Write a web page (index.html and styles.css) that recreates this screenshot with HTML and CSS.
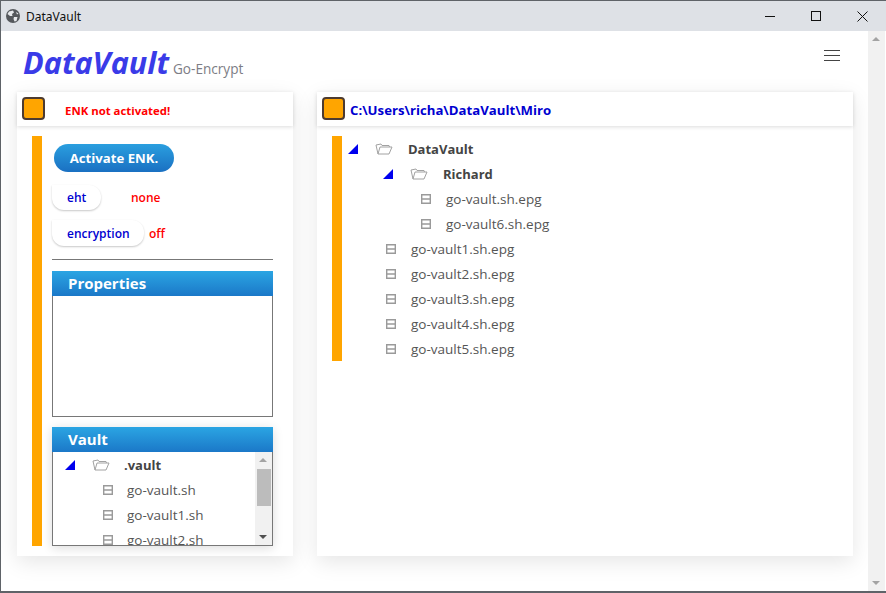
FILE: index.html
```html
<!DOCTYPE html>
<html>
<head>
  <meta charset="UTF-8">
  <title>DataVault</title>
  <link rel="stylesheet" href="styles.css">
</head>
<body>
  <svg class="sprites" width="0" height="0">
    <symbol id="i-tri" viewBox="0 0 10 10"><polygon points="10,0 10,10 0,10" fill="#0000ee"/></symbol>
    <symbol id="i-folder" viewBox="0 0 18 12">
      <path d="M3 11 L1 2 L6 1 L7 2.5 L14 2.5 L14.5 4 M3 11 L5 4 L17 4 L14 11 Z" fill="none" stroke="#a2a2a2" stroke-width="1"/>
    </symbol>
    <symbol id="i-file" viewBox="0 0 10 10">
      <path d="M0.7 0.7 H9.3 V9.3 H0.7 Z M1 5 H9" fill="none" stroke="#9a9a9a" stroke-width="1.4"/>
    </symbol>
  </svg>

  <div class="window">
    <div class="titlebar">
      <svg class="globe" viewBox="0 0 14 14" width="14" height="14">
        <circle cx="7" cy="7" r="7" fill="#55585c"/>
        <path d="M3 2.5 L7 1.5 L8 3.5 L6 5 L6.5 7 L4 7 L1.5 5 Z M8 8 L11.5 8 L10.5 12 L8.5 12.5 L7.5 10 Z M10 3 L12.5 4.5 L11 5.5 Z" fill="#e6e8eb"/>
      </svg>
      <span class="title">DataVault</span>
      <div class="controls">
        <span class="ctl"><span class="ctl-min"></span></span>
        <span class="ctl"><span class="ctl-max"></span></span>
        <span class="ctl">
          <svg viewBox="0 0 11 11" width="11" height="11"><path d="M0.5 0.5 L10.5 10.5 M10.5 0.5 L0.5 10.5" stroke="#111" stroke-width="1" fill="none"/></svg>
        </span>
      </div>
    </div>

    <div class="client">
      <div class="page">
        <header class="top">
          <div class="brand">
            <span class="logo">DataVault</span>
            <span class="sub">Go-Encrypt</span>
          </div>
          <div class="burger"><span></span><span></span><span></span></div>
        </header>

        <div class="panels">
          <section class="panel panel-left">
            <div class="panel-head">
              <span class="led"></span>
              <span class="warn">ENK not activated!</span>
            </div>
            <div class="panel-body">
              <div class="bar"></div>
              <div class="side">
                <button class="activate">Activate ENK.</button>
                <div class="status status-eht">
                  <span class="pill pill-eht">eht</span>
                  <span class="val val-none">none</span>
                </div>
                <div class="status status-enc">
                  <span class="pill pill-enc">encryption</span>
                  <span class="val val-off">off</span>
                </div>
                <hr class="rule">
                <div class="box box-props">
                  <div class="box-head">Properties</div>
                  <div class="box-body"></div>
                </div>
                <div class="box box-vault">
                  <div class="box-head">Vault</div>
                  <div class="box-body vault-body">
                    <div class="vault-list">
                      <div class="row dir"><svg class="tri"><use href="#i-tri"/></svg><svg class="folder"><use href="#i-folder"/></svg><span>.vault</span></div>
                      <div class="row file in-1"><svg class="doc"><use href="#i-file"/></svg><span>go-vault.sh</span></div>
                      <div class="row file in-1"><svg class="doc"><use href="#i-file"/></svg><span>go-vault1.sh</span></div>
                      <div class="row file in-1"><svg class="doc"><use href="#i-file"/></svg><span>go-vault2.sh</span></div>
                    </div>
                    <div class="mini-scroll">
                      <span class="arrow-up"></span>
                      <span class="thumb"></span>
                      <span class="arrow-down"></span>
                    </div>
                  </div>
                </div>
              </div>
            </div>
          </section>

          <section class="panel panel-right">
            <div class="panel-head">
              <span class="led"></span>
              <span class="path">C:\Users\richa\DataVault\Miro</span>
            </div>
            <div class="panel-body">
              <div class="bar bar-tree">
              </div>
              <div class="tree">
                <div class="row dir"><svg class="tri"><use href="#i-tri"/></svg><svg class="folder"><use href="#i-folder"/></svg><span>DataVault</span></div>
                <div class="row dir sub-dir"><svg class="tri"><use href="#i-tri"/></svg><svg class="folder"><use href="#i-folder"/></svg><span>Richard</span></div>
                <div class="row file in-2"><svg class="doc"><use href="#i-file"/></svg><span>go-vault.sh.epg</span></div>
                <div class="row file in-2"><svg class="doc"><use href="#i-file"/></svg><span>go-vault6.sh.epg</span></div>
                <div class="row file in-1"><svg class="doc"><use href="#i-file"/></svg><span>go-vault1.sh.epg</span></div>
                <div class="row file in-1"><svg class="doc"><use href="#i-file"/></svg><span>go-vault2.sh.epg</span></div>
                <div class="row file in-1"><svg class="doc"><use href="#i-file"/></svg><span>go-vault3.sh.epg</span></div>
                <div class="row file in-1"><svg class="doc"><use href="#i-file"/></svg><span>go-vault4.sh.epg</span></div>
                <div class="row file in-1"><svg class="doc"><use href="#i-file"/></svg><span>go-vault5.sh.epg</span></div>
              </div>
            </div>
          </section>
        </div>
      </div>

      <div class="page-scroll">
        <span class="arrow-up"></span>
        <span class="arrow-down"></span>
      </div>
    </div>
  </div>
</body>
</html>
```

FILE: styles.css
```css
html, body {
  margin: 0;
  height: 100%;
  overflow: hidden;
  background-color: #fff;
}

body {
  font-family: "Open Sans", "Noto Sans", sans-serif;
  font-size: 14px;
  color: #444;
}

.sprites {
  display: none;
}

.window {
  height: 593px;
  box-sizing: border-box;
  display: flex;
  flex-direction: column;
  border-top: 1px solid #5f6368;
  border-left: 1px solid #5f6368;
  border-bottom: 2px solid #5f6368;
}

/* title bar */
.titlebar {
  height: 30px;
  flex: none;
  display: flex;
  align-items: center;
  padding-left: 5px;
  background-color: #dee1e6;
}

.globe {
  margin-top: -1px;
}

.title {
  margin-left: 6px;
  font-family: "Noto Sans", sans-serif;
  font-size: 12px;
  color: #111;
}

.controls {
  margin-left: auto;
  margin-right: 1px;
  display: flex;
}

.ctl {
  width: 46px;
  height: 29px;
  display: flex;
  align-items: center;
  justify-content: center;
}

.ctl-min {
  width: 10px;
  height: 1px;
  background-color: #111;
}

.ctl-max {
  width: 8px;
  height: 8px;
  border: 1px solid #111;
}

/* page */
.client {
  flex: 1;
  display: flex;
  min-height: 0;
}

.page {
  flex: 1;
  min-width: 0;
  padding: 0 15px 0 16px;
}

.top {
  height: 61px;
  display: flex;
  align-items: flex-start;
  justify-content: space-between;
}

.brand {
  margin: 10px 0 0 6px;
  display: flex;
  align-items: baseline;
  gap: 4px;
}

.logo {
  font-family: "Open Sans", sans-serif;
  font-size: 30.6px;
  font-weight: 700;
  font-style: italic;
  color: #3a3be8;
}

.sub {
  font-size: 13.6px;
  color: #7d7d85;
}

.burger {
  margin: 19px 13px 0 0;
  width: 16px;
  display: flex;
  flex-direction: column;
  gap: 4px;
}

.burger span {
  height: 1px;
  background-color: #444;
}

.panels {
  display: flex;
  gap: 24px;
}

.panel {
  height: 464px;
  background-color: #fff;
  box-shadow: 0 6px 20px rgba(0, 0, 0, 0.1);
}

.panel-left {
  width: 276px;
  flex: none;
}

.panel-right {
  width: 536px;
  flex: none;
}

.panel-head {
  height: 34px;
  display: flex;
  align-items: center;
  padding-left: 5px;
  box-shadow: 0 1px 4px rgba(0, 0, 0, 0.14);
}

.led {
  width: 19px;
  height: 19px;
  flex: none;
  margin-bottom: 1px;
  border: 2px solid #4d3b30;
  border-radius: 4px;
  background-color: #ffa500;
}

.warn {
  margin-left: 20px;
  padding-top: 3px;
  font-size: 11.4px;
  font-weight: 700;
  color: #f00;
}

.path {
  margin-left: 5px;
  padding-top: 2px;
  font-size: 13.2px;
  font-weight: 700;
  color: #0000d0;
}

.panel-body {
  display: flex;
  height: 410px;
  padding: 10px 0 0 15px;
}

.bar {
  width: 10px;
  flex: none;
  background-color: #ffa500;
}

.bar-tree {
  height: 225px;
}

/* left column */
.side {
  width: 221px;
  margin-left: 10px;
  display: flex;
  flex-direction: column;
}

.activate {
  align-self: flex-start;
  width: 120px;
  height: 28px;
  margin: 8px 0 0 2px;
  padding: 0;
  border: none;
  border-radius: 14px;
  background: linear-gradient(#2a9fdf, #1a70c2);
  font-family: inherit;
  font-size: 13.2px;
  font-weight: 700;
  color: #fff;
}

.status {
  display: flex;
  align-items: center;
  font-size: 12px;
  font-weight: 600;
}

.status-eht {
  margin-top: 13px;
}

.status-enc {
  margin-top: 10px;
}

.pill {
  height: 25px;
  box-sizing: border-box;
  padding-left: 15px;
  display: flex;
  align-items: center;
  border-radius: 0 12px 12px 12px;
  background-color: #fff;
  box-shadow: 0 1px 2px rgba(0, 0, 0, 0.22);
  color: #0000d0;
}

.pill-eht {
  width: 49px;
}

.pill-enc {
  width: 92px;
  height: 26px;
}

.val {
  color: #f00;
}

.val-none {
  margin-left: 30px;
}

.val-off {
  margin-left: 5px;
}

.rule {
  width: 100%;
  height: 1px;
  margin: 13px 0 11px;
  border: none;
  background-color: #777;
}

.box {
  display: flex;
  flex-direction: column;
}

.box-head {
  height: 25px;
  flex: none;
  box-sizing: border-box;
  padding-left: 16px;
  background: linear-gradient(#2ba5e3, #1b78c8);
  font-size: 15px;
  font-weight: 700;
  line-height: 24px;
  color: #fff;
}

.box-body {
  flex: 1;
  border: 1px solid #777;
  border-top: none;
}

.box-props {
  height: 146px;
}

.box-vault {
  height: 119px;
  margin-top: 10px;
  box-shadow: 0 2px 10px rgba(0, 0, 0, 0.14);
}

.vault-body {
  position: relative;
  overflow: hidden;
  min-height: 0;
}

.vault-list {
  padding-left: 12px;
}

.vault-list .in-1 {
  padding-left: 38px;
}

.vault-list .doc {
  margin-right: 14px;
}

.mini-scroll {
  position: absolute;
  top: 0;
  right: 0;
  bottom: 0;
  width: 17px;
  background-color: #f1f1f1;
}

.thumb {
  position: absolute;
  top: 17px;
  left: 2px;
  width: 14px;
  height: 37px;
  background-color: #bcbcbc;
}

/* trees */
.tree {
  margin-left: 6px;
}

.row {
  height: 25px;
  display: flex;
  align-items: center;
  white-space: nowrap;
  font-size: 13.5px;
  color: #555;
}

.row.dir {
  font-weight: 700;
  font-size: 13px;
  color: #444;
}

.tree .sub-dir {
  padding-left: 35px;
}

.tree .in-1 {
  padding-left: 38px;
}

.tree .in-2 {
  padding-left: 73px;
}

.tri {
  width: 10px;
  height: 10px;
  flex: none;
}

.folder {
  width: 18px;
  height: 12px;
  flex: none;
  margin-left: 17px;
  margin-right: 14px;
}

.tree .folder {
  margin-right: 15px;
}

.doc {
  width: 10px;
  height: 10px;
  flex: none;
  margin-right: 15px;
}

/* window scrollbar */
.page-scroll {
  position: relative;
  width: 17px;
  flex: none;
  margin-right: 1px;
  background-color: #f1f1f1;
}

.arrow-up,
.arrow-down {
  position: absolute;
  left: 4px;
  width: 0;
  height: 0;
  border-left: 4px solid transparent;
  border-right: 4px solid transparent;
}

.arrow-up {
  top: 6px;
  border-bottom: 4px solid #a3a3a3;
}

.arrow-down {
  bottom: 6px;
  border-top: 4px solid #505050;
}

.page-scroll .arrow-down {
  border-top-color: #a3a3a3;
}
```
